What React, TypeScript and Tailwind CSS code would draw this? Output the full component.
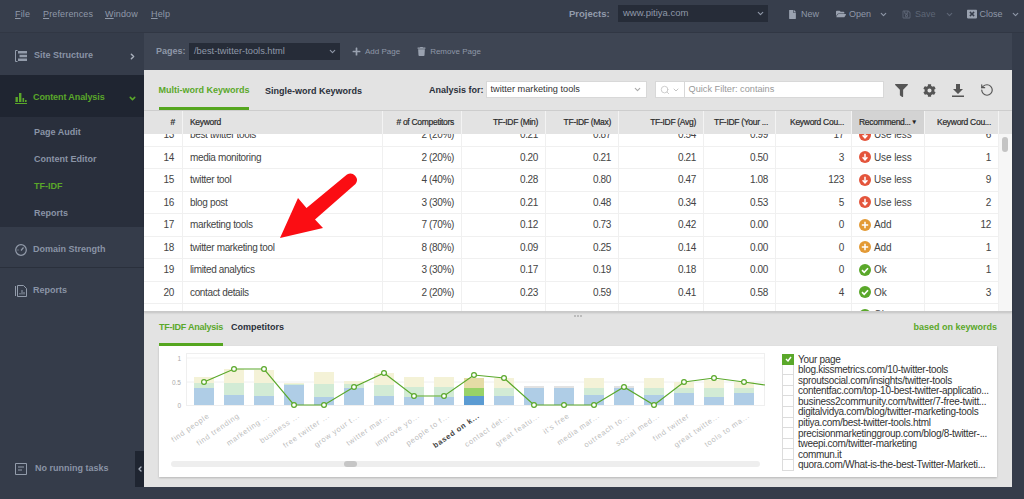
import { ChevronDown, ChevronRight, ChevronLeft, RotateCcw, Search } from 'lucide-react'
import { FaCog, FaFile, FaFilter, FaFolderOpen, FaPlus, FaRegSave, FaTrash, FaWindowClose } from 'react-icons/fa'

const rows = [
  ['13', 'best twitter tools', '2 (20%)', '0.21', '0.87', '0.54', '0.99', '17', 'less', '6'],
  ['14', 'media monitoring', '2 (20%)', '0.20', '0.21', '0.21', '0.50', '3', 'less', '1'],
  ['15', 'twitter tool', '4 (40%)', '0.28', '0.80', '0.47', '1.08', '123', 'less', '9'],
  ['16', 'blog post', '3 (30%)', '0.21', '0.48', '0.34', '0.53', '5', 'less', '2'],
  ['17', 'marketing tools', '7 (70%)', '0.12', '0.73', '0.42', '0.00', '0', 'add', '12'],
  ['18', 'twitter marketing tool', '8 (80%)', '0.09', '0.25', '0.14', '0.00', '0', 'add', '1'],
  ['19', 'limited analytics', '3 (30%)', '0.17', '0.19', '0.18', '0.00', '0', 'ok', '1'],
  ['20', 'contact details', '2 (20%)', '0.23', '0.59', '0.41', '0.58', '4', 'ok', '3'],
  ['', '', '', '', '', '', '', '', 'ok', ''],
]

const columns = 'grid grid-cols-[39px_200px_79px_84px_73px_85px_72px_76px_73px_74px]'

const headers = ['#', 'Keyword', '# of Competitors', 'TF-IDF (Min)', 'TF-IDF (Max)', 'TF-IDF (Avg)', 'TF-IDF (Your ...', 'Keyword Cou...', 'Recommend...', 'Keyword Cou...']

// blue, green, yellow heights, point y
const bars = [
  [17, 22, 28, 382, 'find people'],
  [10, 22, 36, 369, 'find trending'],
  [9, 22, 35, 369, 'marketing ...'],
  [20, 21, 22, 405, 'business ...'],
  [8, 21, 33, 405, 'free twitter ...'],
  [17, 21, 24, 387, 'grow your t...'],
  [9, 20, 32, 373, 'twitter mar...'],
  [8, 18, 28, 396, 'improve yo...'],
  [8, 18, 28, 396, 'people to f...'],
  [9, 17, 27, 375, 'based on k...'],
  [9, 17, 27, 378, 'contact det...'],
  [17, 17, 19, 405, 'great featu...'],
  [17, 17, 19, 405, "it's free"],
  [10, 17, 27, 405, 'media mar...'],
  [17, 17, 19, 387, 'outreach to...'],
  [10, 17, 27, 405, 'social med...'],
  [12, 17, 23, 382, 'find twitter'],
  [8, 17, 25, 378, 'great twitte...'],
  [12, 17, 23, 382, 'tools to ma...'],
] as [number, number, number, number, string][]

const legend = [
  'Your page',
  'blog.kissmetrics.com/10-twitter-tools',
  'sproutsocial.com/insights/twitter-tools',
  'contentfac.com/top-10-best-twitter-applicatio...',
  'business2community.com/twitter/7-free-twitt...',
  'digitalvidya.com/blog/twitter-marketing-tools',
  'pitiya.com/best-twitter-tools.html',
  'precisionmarketinggroup.com/blog/8-twitter-...',
  'tweepi.com/twitter-marketing',
  'commun.it',
  'quora.com/What-is-the-best-Twitter-Marketi...',
]

function RecIcon({ kind }: { kind: string }) {
  const fill = kind === 'less' ? '#e4553c' : kind === 'add' ? '#e39a35' : '#5aa82a'
  return (
    <svg width="12" height="12" viewBox="0 0 12 12" className="shrink-0">
      <circle cx="6" cy="6" r="6" fill={fill} />
      {kind === 'less' && <path d="M6 2.8V8.6M3.6 6.2 6 8.8l2.4-2.6" stroke="#fff" strokeWidth="1.5" fill="none" />}
      {kind === 'add' && <path d="M6 2.8v6.4M2.8 6h6.4" stroke="#fff" strokeWidth="1.5" fill="none" />}
      {kind === 'ok' && <path d="M3 6.2 5.2 8.3 9 4.2" stroke="#fff" strokeWidth="1.6" fill="none" />}
    </svg>
  )
}

function Menu({ label }: { label: string }) {
  return (
    <span className="mt-[3px] text-[9px] tracking-[0.15px] text-[#8f98a8]">
      <span className="underline">{label[0]}</span>
      {label.slice(1)}
    </span>
  )
}

function TopBar() {
  return (
    <div className="h-[33px] shrink-0 flex items-center pb-[5px] bg-[#373e4c] text-[#8f98a8] border-b border-[#313744]">
      <div className="flex items-center w-[560px] pl-[15px]">
        <div className="w-[28px] flex items-center"><Menu label="File" /></div>
        <div className="w-[62px] flex items-center"><Menu label="Preferences" /></div>
        <div className="w-[46px] flex items-center"><Menu label="Window" /></div>
        <Menu label="Help" />
      </div>
      <span className="ml-[9px] mt-[1px] text-[9.5px] font-bold text-[#939cac] w-[49px]">Projects:</span>
      <div className="w-[150px] h-[17px] bg-[#262c38] flex items-center justify-between pl-[5px] pr-[3px] text-[9.5px] text-[#8f98a8]">
        www.pitiya.com
        <ChevronDown size={9} strokeWidth={3} />
      </div>
      <FaFile size={9} className="ml-[20px] mt-[1px] text-[#9aa2b0]" />
      <span className="ml-[4px] mt-[3px] text-[9px]">New</span>
      <FaFolderOpen size={10} className="ml-[17px] mt-[1px] text-[#9aa2b0]" />
      <span className="ml-[3px] mt-[3px] text-[9px]">Open</span>
      <ChevronDown size={9} strokeWidth={3} className="ml-[8px] mt-[1px]" />
      <FaRegSave size={9} className="ml-[14px] mt-[1px] text-[#5e6676]" />
      <span className="ml-[4px] mt-[3px] text-[9px] text-[#5e6676]">Save</span>
      <ChevronDown size={9} strokeWidth={3} className="ml-[9px] mt-[1px] text-[#5e6676]" />
      <FaWindowClose size={10} className="ml-[13px] mt-[1px] text-[#9aa2b0]" />
      <span className="ml-[3px] mt-[3px] text-[9px]">Close</span>
      <ChevronDown size={9} strokeWidth={3} className="ml-[8px] mt-[1px]" />
    </div>
  )
}

function Sidebar() {
  return (
    <div className="w-[144px] shrink-0 bg-[#353c4a] flex flex-col text-[9px] font-bold relative">
      <div className="h-[42px] flex items-center pt-[4px] pl-[15px] pr-[7px] text-[#8a94a6]">
        <svg width="12" height="12" viewBox="0 0 12 12" className="mr-[7px]" fill="none">
          <path d="M2.5.5H.5v11h2" stroke="#939cab" />
          <path d="M3 1h9v2.4H3zM4.5 4.8H12v2.4H4.5zM3 8.6h9V11H3z" fill="#939cab" />
        </svg>
        Site Structure
        <ChevronRight size={9} strokeWidth={4} className="ml-auto text-[#aab1bd]" />
      </div>
      <div className="h-[42px] flex items-center pt-[4px] pl-[15px] pr-[7px] bg-[#1f2531] text-[#5aa82a]">
        <svg width="12" height="12" viewBox="0 0 12 12" className="mr-[6px]" fill="#5aa82a">
          <path d="M0 11h12v1H0zM.5 5h2.4v5H.5zM4 1h2.4v9H4zM7.5 6h1.6v4H7.5zM10 8h1.6v2H10z" />
        </svg>
        <span className="tracking-[-0.1px]">Content Analysis</span>
        <ChevronDown size={9} strokeWidth={4} className="ml-auto" />
      </div>
      <div className="h-[110px] bg-[#292f3c] flex flex-col pt-[2px] pl-[34px] text-[#8a94a6]">
        <div className="h-[27px] flex items-center">Page Audit</div>
        <div className="h-[27px] flex items-center">Content Editor</div>
        <div className="h-[27px] flex items-center text-[#5aa82a]">TF-IDF</div>
        <div className="h-[27px] flex items-center">Reports</div>
      </div>
      <div className="h-[41px] flex items-center pt-[5px] pl-[15px] text-[#8a94a6] border-b border-[#2a303c]">
        <svg width="12" height="12" viewBox="0 0 12 12" className="mr-[6px]" fill="none" stroke="#939cab" strokeWidth="1.2">
          <circle cx="6" cy="6" r="5.3" />
          <path d="M6 6.5 8.5 3.5M2.5 6h1" />
        </svg>
        Domain Strength
      </div>
      <div className="h-[42px] flex items-center pt-[4px] pl-[15px] text-[#8a94a6]">
        <svg width="12" height="12" viewBox="0 0 12 12" className="mr-[6px]" fill="none" stroke="#939cab">
          <path d="M.5 1v10M2.5.5h6l3 3v8h-9z" />
          <path d="M5 9.5V8M7 9.5V5M9 9.5V7" />
        </svg>
        Reports
      </div>
      <div className="mt-auto h-[36px] flex items-center pl-[15px] text-[#8a94a6] mb-[12px]">
        <svg width="12" height="12" viewBox="0 0 12 12" className="mr-[8px]" fill="none" stroke="#939cab">
          <path d="M.5.5h11v11H.5zM3 4h6M3 7h4" />
        </svg>
        No running tasks
      </div>
      <div className="absolute right-0 bottom-[12px] w-[9px] h-[36px] bg-[#1f2531] flex items-center justify-center text-[#aab1bd]">
        <ChevronLeft size={8} strokeWidth={4} />
      </div>
    </div>
  )
}

function Toolbar() {
  return (
    <div className="h-[41px] shrink-0 flex items-start text-[9px] font-bold border-b border-[#cfcfcf]">
      <div className="ml-[15px] h-[40px] w-[90px] flex items-center justify-center pt-[4px] border-b-[3px] border-[#55a61f] text-[#5aa82a] whitespace-nowrap">
        Multi-word Keywords
      </div>
      <div className="ml-[16px] h-[40px] flex items-center pt-[4px] text-[#2a2f3a] whitespace-nowrap">Single-word Keywords</div>
      <div className="ml-[67px] h-[40px] flex items-center pt-[2px] text-[#2a2f3a] whitespace-nowrap">Analysis for:</div>
      <div className="ml-[2px] mt-[11px] w-[161px] h-[17px] bg-white border border-[#d8d8d8] flex items-center justify-between pl-[4px] pr-[4px] text-[9.2px] font-normal text-[#333]">
        twitter marketing tools
        <ChevronDown size={9} strokeWidth={3} className="text-[#aaa]" />
      </div>
      <div className="ml-[8px] mt-[11px] w-[229px] h-[17px] bg-white border border-[#d8d8d8] flex items-center font-normal text-[#aaa]">
        <div className="w-[29px] h-full flex items-center justify-center gap-[2px] border-r border-[#d8d8d8]">
          <Search size={10} className="text-[#c4c4c4]" />
          <ChevronDown size={8} strokeWidth={3} className="text-[#c4c4c4]" />
        </div>
        <span className="pl-[4px] text-[9.2px] text-[#999]">Quick Filter: contains</span>
      </div>
      <div className="ml-[11px] h-[40px] flex items-center gap-[15px] text-[#555]">
        <FaFilter size={13} />
        <FaCog size={13} />
        <svg width="14" height="13" viewBox="0 0 14 13" fill="#555">
          <path d="M5 0h4v5h3L7 10 2 5h3zM1 11.5h12V13H1z" />
        </svg>
        <RotateCcw size={14} strokeWidth={2} />
      </div>
    </div>
  )
}

function KeywordTable() {
  return (
    <div className="h-[201px] shrink-0 flex flex-col bg-white border-b border-[#c9c9c9] shadow-[0_1px_2px_rgba(0,0,0,0.15)] relative">
      <div className="flex h-[23px] shrink-0 bg-[#e3e3e3] relative z-10">
        <div className={columns}>
          {headers.map((h, i) => (
            <div
              key={h + i}
              className={`flex items-center text-[8.5px] tracking-[-0.3px] [-webkit-text-stroke:0.2px] text-[#2a2a2a] border-r border-[#f3f3f3] whitespace-nowrap px-[7px] ${
                i === 1 ? 'justify-start' : i === 8 ? 'justify-between bg-[#d3d3d3]' : 'justify-end'
              }`}
            >
              {h}
              {i === 8 && <span className="text-[6px] text-[#222]">▼</span>}
            </div>
          ))}
        </div>
      </div>
      <div className="flex-1 flex overflow-hidden">
        <div className="w-[855px] -mt-[10px]">
          {rows.map((r, n) => (
            <div key={n} className={`${columns} h-[22.5px] border-b border-[#f0f0f0] text-[10px] tracking-[-0.35px] text-[#444]`}>
              {r.map((c, i) => (
                <div
                  key={i}
                  className={`flex items-center border-r border-[#f0f0f0] px-[7px] whitespace-nowrap ${
                    i === 1 || i === 8 ? 'justify-start' : 'justify-end'
                  } ${i === 0 ? 'pr-[8px]' : ''}`}
                >
                  {i === 8 ? (
                    <span className="flex items-center gap-[3px] tracking-[-0.1px]">
                      <RecIcon kind={c} />
                      {c === 'less' ? 'Use less' : c === 'add' ? 'Add' : 'Ok'}
                    </span>
                  ) : (
                    c
                  )}
                </div>
              ))}
            </div>
          ))}
        </div>
        <div className="flex-1 bg-[#f6f6f6] pt-[3px] pl-[3px]">
          <div className="w-[6px] h-[15px] rounded-full bg-[#c4c4c4]" />
        </div>
      </div>
    </div>
  )
}

function Chart() {
  const points = bars.map((b, i) => `${204 + 30 * i},${b[3]}`).join(' ')
  return (
    <svg width="620" height="131" viewBox="159 346 620 131" className="shrink-0">
      <rect x="186.5" y="353.5" width="578" height="52" fill="#fff" stroke="#efefef" />
      <line x1="187" x2="764" y1="358" y2="358" stroke="#f3f3f3" />
      <line x1="187" x2="764" y1="382" y2="382" stroke="#f0f0f0" />
      <text x="181" y="361" fontSize="6.5" fill="#aaa" textAnchor="end">1</text>
      <text x="181" y="385" fontSize="6.5" fill="#aaa" textAnchor="end">0.5</text>
      <text x="181" y="408" fontSize="6.5" fill="#aaa" textAnchor="end">0</text>
      {bars.map((b, i) => {
        const x = 194 + 30 * i
        const sel = i === 9
        const gray = b[2] === 19
        return (
          <g key={i}>
            <rect x={x} y={405 - b[2]} width="20" height={b[2]} fill={gray ? '#e2e2e2' : sel ? '#e5dca6' : '#f4f2d7'} />
            <rect x={x} y={405 - b[1]} width="20" height={b[1]} fill={gray ? '#afcde6' : sel ? '#98d268' : '#d2ebd5'} />
            <rect x={x} y={405 - b[0]} width="20" height={b[0]} fill={sel ? '#5b9bd2' : '#afcde6'} />
            <text
              x={x + 16}
              y={417}
              fontSize="7.5"
              letterSpacing="0.7"
              fontWeight={sel ? 700 : 400}
              fill={sel ? '#444' : '#bdbdbd'}
              textAnchor="end"
              transform={`rotate(-35 ${x + 16} 417)`}
            >
              {b[4]}
            </text>
          </g>
        )
      })}
      <polyline points={`${points} 765,385`} fill="none" stroke="#5aa82a" strokeWidth="1.2" />
      {bars.map((b, i) => (
        <circle key={i} cx={204 + 30 * i} cy={b[3]} r="2.4" fill="#fff" stroke="#5aa82a" strokeWidth="1.2" />
      ))}
      <rect x="171" y="461" width="589" height="6" rx="3" fill="#eeeeee" />
      <rect x="344" y="461" width="13" height="6" rx="3" fill="#c6c6c6" />
    </svg>
  )
}

function Legend() {
  return (
    <div className="ml-[3px] pt-[8px] flex flex-col text-[10px] tracking-[-0.3px] leading-[10.6px] text-[#333]">
      {legend.map((l, i) => (
        <div key={l} className="flex items-center h-[10.6px] whitespace-nowrap">
          <div
            className={`w-[12px] h-[10.6px] mr-[4px] shrink-0 flex items-center justify-center ${
              i === 0 ? 'bg-[#5aa82a]' : 'border-x border-b border-[#dcdcdc]'
            }`}
          >
            {i === 0 && (
              <svg width="7" height="6" viewBox="0 0 7 6" fill="none">
                <path d="M1 3 3 5 6 1" stroke="#fff" strokeWidth="1.4" />
              </svg>
            )}
          </div>
          <span className="pt-[1px]">{l}</span>
        </div>
      ))}
    </div>
  )
}

function BottomPanel() {
  return (
    <div className="flex-1 flex flex-col relative">
      <div className="absolute top-[3px] left-1/2 -translate-x-1/2 flex gap-[1px]">
        <span className="w-[2px] h-[2px] bg-[#bbb]" />
        <span className="w-[2px] h-[2px] bg-[#bbb]" />
        <span className="w-[2px] h-[2px] bg-[#bbb]" />
      </div>
      <div className="h-[34px] shrink-0 flex text-[9px] font-bold pl-[15px] pr-[15px]">
        <div className="w-[64px] flex items-center justify-center border-b-[3px] border-[#55a61f] text-[#5aa82a] tracking-[-0.25px] whitespace-nowrap">
          TF-IDF Analysis
        </div>
        <div className="ml-[8px] flex items-center pb-[3px] text-[#2a2f3a]">Competitors</div>
        <div className="ml-auto flex items-center pb-[3px] text-[#5aa82a]">based on keywords</div>
      </div>
      <div className="mx-[15px] h-[131px] bg-white shadow-[0_1px_2px_rgba(0,0,0,0.2)] flex">
        <Chart />
        <Legend />
      </div>
    </div>
  )
}

export default function App() {
  return (
    <div className="w-[1024px] h-[499px] overflow-hidden flex flex-col relative bg-[#353c4a] font-['Liberation_Sans',Arial,sans-serif]">
      <TopBar />
      <div className="flex-1 flex min-h-0">
        <Sidebar />
        <div className="w-[868px] flex flex-col">
          <div className="h-[37px] shrink-0 bg-[#3e4553] flex items-center pl-[12px] text-[8px] text-[#8f98a8]">
            <span className="font-bold text-[9px] w-[33px]">Pages:</span>
            <div className="w-[151px] h-[17px] bg-[#262c38] flex items-center justify-between pl-[5px] pr-[3px] text-[9.3px]">
              /best-twitter-tools.html
              <ChevronDown size={9} strokeWidth={3} />
            </div>
            <FaPlus size={9} className="ml-[12px] text-[#9aa2b0]" />
            <span className="ml-[4px]">Add Page</span>
            <FaTrash size={9} className="ml-[17px] text-[#9aa2b0]" />
            <span className="ml-[4px]">Remove Page</span>
          </div>
          <div className="h-[417px] shrink-0 bg-[#e3e3e3] flex flex-col">
            <Toolbar />
            <KeywordTable />
            <BottomPanel />
          </div>
        </div>
      </div>
      <svg width="90" height="76" viewBox="275 168 90 76" className="absolute left-[275px] top-[168px] pointer-events-none">
        <path d="M280 238 298 198 306.5 208 347 174.5a6.5 6.5 0 0 1 8.5 9.5L315 219.5 323 228Z" fill="#fb0d13" />
      </svg>
    </div>
  )
}
